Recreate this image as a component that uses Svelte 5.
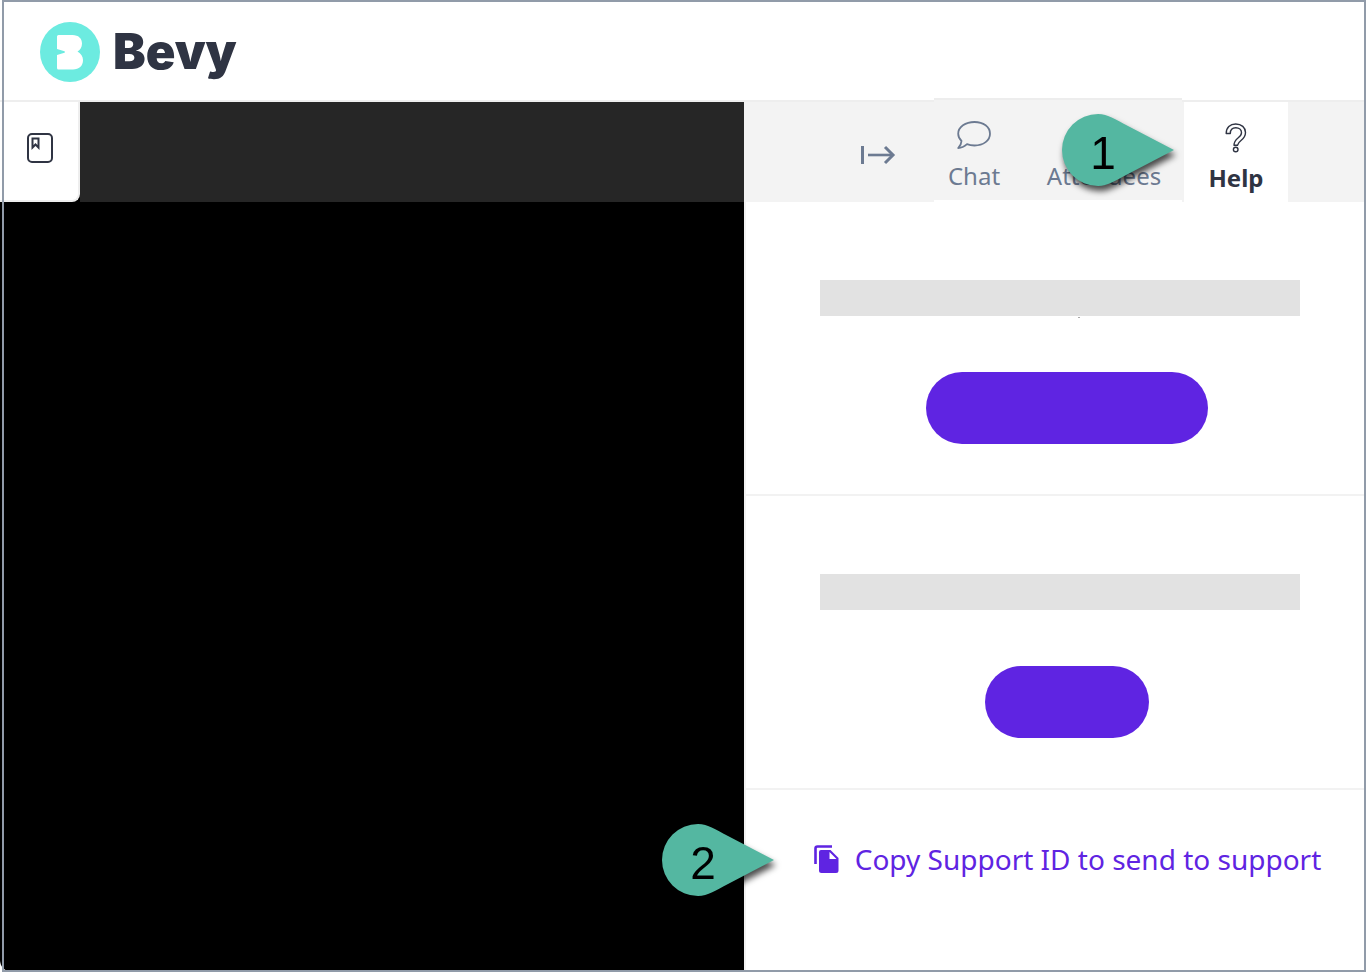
<script>
  let active = "help";
  let supportId = "";

  function copySupportId() {
    navigator.clipboard?.writeText(supportId);
  }
</script>

<div class="page">
  <header>
    <a class="brand" href="/" aria-label="Bevy">
      <svg width="60" height="60" viewBox="0 0 60 60" aria-hidden="true">
        <circle cx="30" cy="30" r="30" fill="#6cebe0" />
        <path
          d="M18.500 13H32.500C38.500 13 42 16.500 42 21.500C42 25.500 40 28 37.500 29.500C41 31.500 43 34.500 43 38C43 44 39 47.500 33 47.500H18.500Q17 47.500 17 46V33L24.500 30.800Q25.500 30 24.500 29.200L17 27V14.500Q17 13 18.500 13Z"
          fill="#fff"
        />
      </svg>
      <span>Bevy</span>
    </a>
  </header>

  <main>
    <section class="stage">
      <div class="stage-bar">
        <button class="agenda" aria-label="Agenda">
          <svg width="28" height="32" viewBox="0 0 28 32" fill="none" stroke="#2f3443">
            <rect x="2" y="2" width="24" height="28" rx="4" stroke-width="2" />
            <path d="M6.500 6.500H12.500V15.500L9.500 12.500L6.500 15.500Z" stroke-width="2" />
          </svg>
        </button>
      </div>
    </section>

    <aside>
      <nav>
        <button class="collapse" aria-label="Collapse panel">
          <svg width="36" height="20" viewBox="0 0 36 20" fill="none" stroke="#6c7a91">
            <path d="M2.500 1V19" stroke-width="3" />
            <path d="M8 10H33" stroke-width="2.600" />
            <path d="M25 2L33 10L25 18" stroke-width="3" />
          </svg>
        </button>

        <div class="group">
          <button class="tab chat" class:active={active === "chat"} on:click={() => (active = "chat")}>
            <svg width="34" height="28" viewBox="0 0 34 28" fill="none" stroke="#6c7a91" stroke-width="1.800" stroke-linejoin="round">
              <path d="M17.500 1C26.500 1 33 6 33 12.700C33 19.500 26.500 24.500 17.500 24.500C14.500 24.500 12 24 10 23.200C7.500 25.500 4.500 27 1.200 27C3 25 4.500 22.500 4.500 20C2.500 18 1.200 15.500 1.200 12.700C1.200 6 8.500 1 17.500 1Z" />
            </svg>
            Chat
          </button>
          <button class="tab attendees" class:active={active === "attendees"} on:click={() => (active = "attendees")}>
            Attendees
          </button>
          <div class="callout">
            <svg width="112" height="72" viewBox="0 0 112 72" aria-hidden="true">
              <path d="M112 36L66 12C54 6 46 0 36 0A36 36 0 0 0 36 72C46 72 54 66 66 60Z" fill="#54b7a1" />
            </svg>
            <span>1</span>
          </div>
        </div>

        <button class="tab help" class:active={active === "help"} on:click={() => (active = "help")}>
          <svg width="22" height="30" viewBox="0 0 22 30" fill="none" stroke="#2f3443" stroke-width="1.400" stroke-linejoin="round">
            <path d="M1.200 10.500C1.200 4.500 5 1 10.700 1C16.500 1 20.500 4.500 20.500 9.500C20.500 13.500 18.500 15.500 16 17.500C13.500 19.500 13 20.500 12.500 22.200H9C9 19 10.500 17 13 15C15.500 13 16.500 12 16.500 9.700C16.500 6.700 14 4.700 10.800 4.700C7.500 4.700 5.300 6.700 5.300 10.500Z" />
            <circle cx="10.700" cy="26.500" r="2.300" />
          </svg>
          Help
        </button>
      </nav>

      <div class="card">
        <div class="placeholder clipped"></div>
        <button class="pill wide" aria-label="Open help"></button>
      </div>
      <div class="card">
        <div class="placeholder"></div>
        <button class="pill" aria-label="Contact"></button>
      </div>
      <div class="support">
        <button class="copy" on:click={copySupportId}>
          <svg width="26" height="30" viewBox="0 0 26 30">
            <path d="M2.500 20V4.500Q2.500 2.500 4.500 2.500H19" fill="none" stroke="#5f24e2" stroke-width="2.600" />
            <path fill-rule="evenodd" d="M8 6H17.500L25.500 14V26.500Q25.500 29 23 29H8.500Q6 29 6 26.500V8Q6 6 8 6ZM16.500 8V15H23.500Z" fill="#5f24e2" />
          </svg>
          Copy Support ID to send to support
        </button>
        <div class="callout">
          <svg width="112" height="72" viewBox="0 0 112 72" aria-hidden="true">
            <path d="M112 36L66 12C54 6 46 0 36 0A36 36 0 0 0 36 72C46 72 54 66 66 60Z" fill="#54b7a1" />
          </svg>
          <span>2</span>
        </div>
      </div>
    </aside>
  </main>
</div>

<style>
  :global(body) { background: #fff; }
  * { box-sizing: border-box; }
  button { margin: 0; padding: 0; border: none; background: none; font: inherit; color: inherit; cursor: pointer; }
  svg { display: block; flex: none; }

  .page { position: relative; display: flex; flex-direction: column; min-height: calc(100vh - 2px); margin-bottom: 2px; font-family: "Noto Sans", sans-serif; color: #2f3443; }
  .page::after { content: ""; position: absolute; inset: 0 0 0 2px; border: 2px solid #919ba9; pointer-events: none; }

  header { display: flex; align-items: center; height: 102px; padding: 4px 40px 0; border-bottom: 2px solid #eee; }
  .brand { display: flex; align-items: center; gap: 13px; color: #2f3443; text-decoration: none; }
  .brand span { font: 900 49px/60px Inter, sans-serif; }

  main { flex: 1; display: grid; grid-template-columns: minmax(0, 1fr) 622px; }
  .stage { background: #000; border-bottom-left-radius: 12px; }
  .stage-bar { display: flex; height: 100px; background: linear-gradient(90deg, #000 80px, #262626 80px); }
  .agenda { display: flex; align-items: center; justify-content: center; width: 80px; height: 100px; padding: 0 0 6px 2px; border: solid #eee; border-width: 0 2px 2px 0; border-bottom-right-radius: 8px; background: #fff; }

  aside { border-left: 2px solid #f2f2f2; background: #fff; }
  nav { display: flex; justify-content: flex-end; height: 100px; padding-right: 78px; background: #f3f3f3; }
  .collapse { display: flex; align-items: center; padding: 6px 38px 0 0; }
  .group { position: relative; display: flex; height: 104px; margin: -4px 2px 0 0; border: solid #ededed; border-width: 2px 0; border-bottom-color: #fff; background: #f3f3f3; }
  .tab { display: flex; flex-direction: column; align-items: center; font-size: 24px; line-height: 32px; color: #6c7a91; }
  .chat { width: 80px; padding-top: 21px; gap: 11px; }
  .attendees { width: 168px; padding: 60px 0 0 12px; }
  .help { width: 104px; padding-top: 21px; gap: 9px; background: #fff; }
  .active { font-weight: 700; color: #2f3443; }

  .card { display: flex; flex-direction: column; align-items: center; padding: 78px 0 50px 22px; border-bottom: 2px solid #f2f2f2; }
  .placeholder { position: relative; width: 480px; height: 36px; margin: 0 14px 56px 0; background: #e2e2e2; }
  .clipped::after { content: ""; position: absolute; top: 37px; left: 258px; width: 2px; height: 1px; background: #aaa; }
  .pill { width: 164px; height: 72px; border-radius: 36px; background: #5f24e2; }
  .wide { width: 282px; }

  .support { position: relative; display: flex; justify-content: center; padding: 49px 0 48px 22px; }
  .copy { display: flex; align-items: center; gap: 16px; font-size: 28px; line-height: 40px; color: #5f24e2; white-space: nowrap; }

  .callout { position: absolute; width: 112px; height: 72px; filter: drop-shadow(2px 5px 3px rgba(0, 0, 0, 0.7)); }
  .callout span { position: absolute; inset: 0 30px 0 0; font: 46px/78px "Liberation Sans", sans-serif; color: #000; text-align: center; }
  .group .callout { top: 14px; right: 8px; }
  .support .callout { top: 34px; left: -84px; }
</style>
